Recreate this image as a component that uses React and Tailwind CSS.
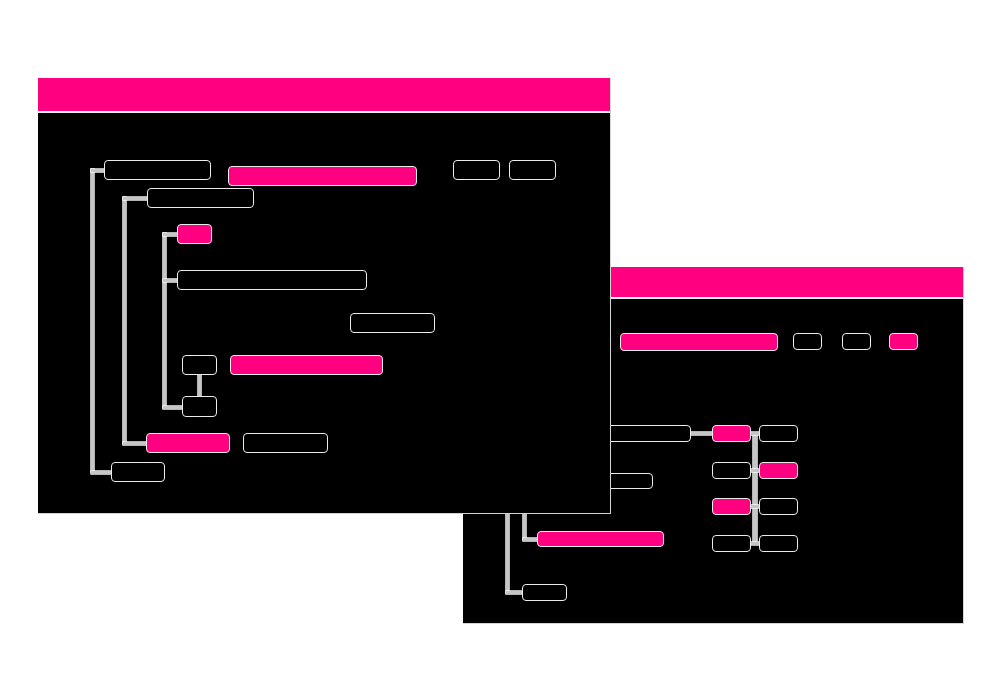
// nodes: [left, top, width, height, pink] measured from the window's top-left
const frontNodes = [
  [66, 82, 107, 20, false],
  [190, 88, 189, 20, true],
  [415, 82, 47, 20, false],
  [471, 82, 47, 20, false],
  [109, 110, 107, 20, false],
  [139, 146, 35, 20, true],
  [139, 192, 190, 20, false],
  [312, 235, 85, 20, false],
  [144, 277, 35, 20, false],
  [192, 277, 153, 20, true],
  [144, 318, 35, 21, false],
  [108, 355, 84, 20, true],
  [205, 355, 85, 20, false],
  [73, 384, 54, 20, false],
];

// lines: [left, top, width, height]
const frontLines = [
  [53, 91, 3, 303],
  [53, 91, 13, 3],
  [53, 393, 20, 3],
  [85, 119, 3, 247],
  [85, 119, 24, 3],
  [85, 364, 23, 3],
  [125, 155, 3, 175],
  [125, 155, 14, 3],
  [125, 201, 14, 3],
  [125, 328, 19, 3],
  [160, 297, 3, 21],
];

const backNodes = [
  [157, 66, 158, 18, true],
  [330, 66, 29, 17, false],
  [379, 66, 29, 17, false],
  [426, 66, 29, 17, true],
  [97, 158, 131, 17, false],
  [249, 158, 39, 17, true],
  [296, 158, 39, 17, false],
  [100, 206, 90, 16, false],
  [249, 195, 39, 17, false],
  [296, 195, 39, 17, true],
  [249, 231, 39, 17, true],
  [296, 231, 39, 17, false],
  [249, 268, 39, 17, false],
  [296, 268, 39, 17, false],
  [74, 264, 127, 16, true],
  [59, 317, 45, 17, false],
];

const backLines = [
  [228, 165, 21, 3],
  [290, 166, 4, 111],
  [288, 165, 8, 3],
  [288, 202, 8, 3],
  [288, 238, 8, 3],
  [288, 275, 8, 3],
  [43, 100, 3, 226],
  [43, 324, 16, 3],
  [60, 100, 3, 173],
  [60, 271, 14, 3],
];

function Node({ n }) {
  const [left, top, width, height, pink] = n;
  return (
    <div
      className={
        "absolute rounded-[4px] border-[1.5px] border-[#ececec] " +
        (pink ? "bg-[#ff0080]" : "bg-black")
      }
      style={{ left, top, width, height }}
    />
  );
}

function Line({ l }) {
  const [left, top, width, height] = l;
  return (
    <div
      className="absolute bg-[#c6c6c6] shadow-[0_0_0_0.7px_#ffffff]"
      style={{ left, top, width, height }}
    />
  );
}

function Window({ className, headerHeight, nodes, lines }) {
  const offset = headerHeight + 2;
  return (
    <div className={"absolute flex flex-col bg-black border-r border-b border-[#d4d4d4] " + className}>
      <div className="shrink-0 bg-[#ff0080]" style={{ height: headerHeight }} />
      <div className="h-[2px] shrink-0 bg-[#f2f2f2]" />
      <div className="relative flex-1">
        {lines.map((l, i) => (
          <Line key={"l" + i} l={[l[0], l[1] - offset, l[2], l[3]]} />
        ))}
        {nodes.map((n, i) => (
          <Node key={"n" + i} n={[n[0], n[1] - offset, n[2], n[3], n[4]]} />
        ))}
      </div>
    </div>
  );
}

export default function App() {
  return (
    <div className="relative w-[1001px] h-[700px] bg-white overflow-hidden">
      <Window
        className="left-[463px] top-[267px] w-[501px] h-[357px]"
        headerHeight={30}
        nodes={backNodes}
        lines={backLines}
      />
      <Window
        className="left-[38px] top-[78px] w-[573px] h-[436px]"
        headerHeight={33}
        nodes={frontNodes}
        lines={frontLines}
      />
    </div>
  );
}
